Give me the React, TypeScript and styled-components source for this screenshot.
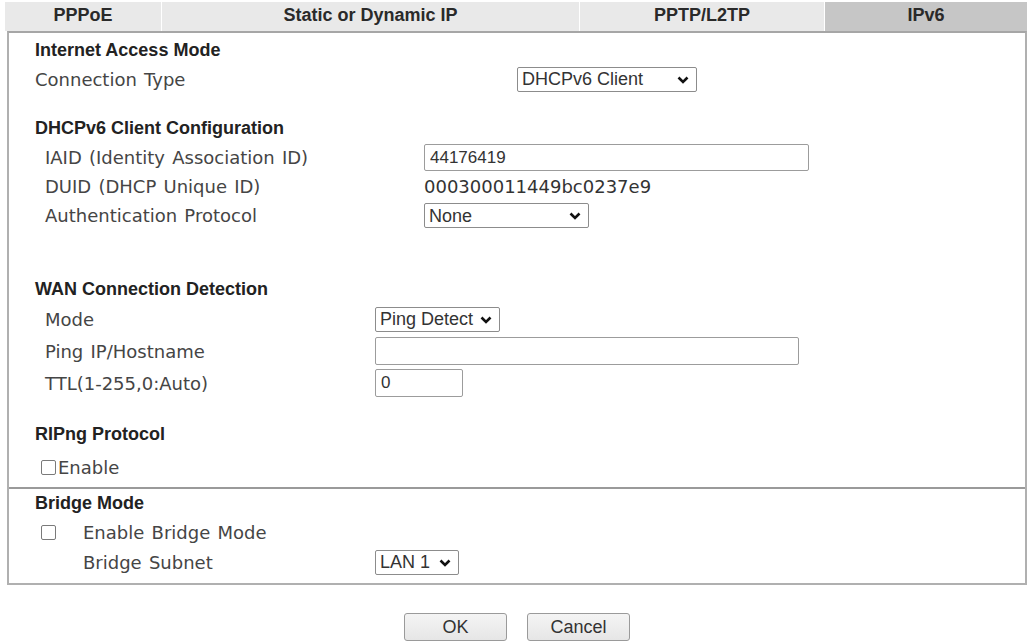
import React from "react";
import styled, { createGlobalStyle } from "styled-components";

const GlobalStyle = createGlobalStyle`
  html, body {
    margin: 0;
    padding: 0;
    background: #ffffff;
  }
  body {
    font-family: "DejaVu Sans", Verdana, sans-serif;
  }
`;

const Page = styled.div`
  width: 1022px;
  padding: 2px 0 0 5px;
`;

const TabBar = styled.div`
  display: grid;
  grid-template-columns: 157px 418px 245px 202px;
  height: 29px;
`;

const Tab = styled.div<{ $active?: boolean }>`
  display: flex;
  align-items: center;
  justify-content: center;
  padding-bottom: 2px;
  background: ${(p) => (p.$active ? "#c6c6c6" : "#e9e9e9")};
  border-right: 1px solid #ffffff;
  font-family: "Liberation Sans", Arial, sans-serif;
  font-weight: bold;
  font-size: 18px;
  color: #2a2a2a;
  &:last-child {
    border-right: none;
  }
`;

const Panel = styled.div`
  margin-left: 2px;
  border: 2px solid #b0b0b0;
  border-top-color: #a6a6a6;
`;

const Section = styled.div<{ $divided?: boolean }>`
  padding: ${(p) => (p.$divided ? "3px 0 6px 26px" : "6px 0 6px 26px")};
  border-top: ${(p) => (p.$divided ? "2px solid #9a9a9a" : "none")};
`;

const Heading = styled.div<{ $gap?: number }>`
  margin-top: ${(p) => p.$gap ?? 0}px;
  font-family: "Liberation Sans", Arial, sans-serif;
  font-weight: bold;
  font-size: 18px;
  line-height: 22px;
  color: #222;
`;

const Row = styled.div<{
  $label: number;
  $height?: number;
  $indent?: number;
  $gap?: number;
}>`
  display: grid;
  grid-template-columns: ${(p) => p.$label}px 1fr;
  align-items: center;
  height: ${(p) => p.$height ?? 29}px;
  margin-top: ${(p) => p.$gap ?? 0}px;
  padding-left: ${(p) => p.$indent ?? 10}px;
`;

const Label = styled.span`
  font-size: 18px;
  word-spacing: 1.5px;
  color: #454545;
  white-space: nowrap;
`;

const Value = styled.span`
  font-size: 18px;
  color: #333;
`;

const TextInput = styled.input<{ $width: number; $height?: number }>`
  box-sizing: border-box;
  width: ${(p) => p.$width}px;
  height: ${(p) => p.$height ?? 28}px;
  padding: 0 5px;
  border: 1px solid #9c9c9c;
  border-radius: 2px;
  font-family: "Liberation Sans", Arial, sans-serif;
  font-size: 17px;
  color: #333;
  background: #fff;
  outline: none;
`;

const SelectWrap = styled.span<{ $width: number }>`
  position: relative;
  display: inline-block;
  width: ${(p) => p.$width}px;
  height: 25px;
`;

const Select = styled.select`
  box-sizing: border-box;
  appearance: none;
  width: 100%;
  height: 100%;
  padding: 0 18px 0 4px;
  border: 1px solid #8c8c8c;
  border-radius: 2px;
  background: #fff;
  font-family: "Liberation Sans", Arial, sans-serif;
  font-size: 18px;
  color: #333;
  outline: none;
`;

const Chevron = styled.svg`
  position: absolute;
  right: 8px;
  top: 9px;
  width: 12px;
  height: 8px;
  pointer-events: none;
`;

const CheckLine = styled.label<{ $gap: number }>`
  display: flex;
  align-items: center;
  gap: ${(p) => p.$gap}px;
  font-size: 18px;
  word-spacing: 1.5px;
  color: #454545;
  white-space: nowrap;
`;

const Box = styled.input`
  appearance: none;
  box-sizing: border-box;
  width: 15px;
  height: 15px;
  margin: 0;
  border: 1px solid #7a7a7a;
  border-radius: 2px;
  background: #fff;
`;

const Actions = styled.div`
  display: flex;
  justify-content: center;
  gap: 20px;
  margin-top: 28px;
  margin-left: 2px;
`;

const Button = styled.button`
  width: 103px;
  height: 28px;
  border: 1px solid #9a9a9a;
  border-radius: 3px;
  background: linear-gradient(#f4f4f4, #e6e6e6);
  font-family: "Liberation Sans", Arial, sans-serif;
  font-size: 18px;
  color: #333;
`;

const Dropdown = ({ value, width }: { value: string; width: number }) => (
  <SelectWrap $width={width}>
    <Select defaultValue={value}>
      <option>{value}</option>
    </Select>
    <Chevron viewBox="0 0 12 8">
      <path d="M1.5 1.5 L6 6 L10.5 1.5" fill="none" stroke="#111" strokeWidth="2.6" />
    </Chevron>
  </SelectWrap>
);

const App = () => (
  <>
    <GlobalStyle />
    <Page>
      <TabBar>
        <Tab>PPPoE</Tab>
        <Tab>Static or Dynamic IP</Tab>
        <Tab>PPTP/L2TP</Tab>
        <Tab $active>IPv6</Tab>
      </TabBar>
      <Panel>
        <Section>
          <Heading>Internet Access Mode</Heading>
          <Row $label={482} $indent={0} $height={36}>
            <Label>Connection Type</Label>
            <Dropdown value="DHCPv6 Client" width={180} />
          </Row>

          <Heading $gap={20}>DHCPv6 Client Configuration</Heading>
          <Row $label={379} $gap={4}>
            <Label>IAID (Identity Association ID)</Label>
            <TextInput $width={385} $height={27} defaultValue="44176419" />
          </Row>
          <Row $label={379}>
            <Label>DUID (DHCP Unique ID)</Label>
            <Value>000300011449bc0237e9</Value>
          </Row>
          <Row $label={379}>
            <Label>Authentication Protocol</Label>
            <Dropdown value="None" width={165} />
          </Row>

          <Heading $gap={48}>WAN Connection Detection</Heading>
          <Row $label={330} $height={32} $gap={3}>
            <Label>Mode</Label>
            <Dropdown value="Ping Detect" width={125} />
          </Row>
          <Row $label={330} $height={32}>
            <Label>Ping IP/Hostname</Label>
            <TextInput $width={424} />
          </Row>
          <Row $label={330} $height={32}>
            <Label>TTL(1-255,0:Auto)</Label>
            <TextInput $width={88} defaultValue="0" />
          </Row>

          <Heading $gap={24}>RIPng Protocol</Heading>
          <Row $label={300} $height={28} $indent={6} $gap={8}>
            <CheckLine $gap={2}>
              <Box type="checkbox" />
              Enable
            </CheckLine>
          </Row>
        </Section>

        <Section $divided>
          <Heading>Bridge Mode</Heading>
          <Row $label={300} $height={30} $indent={6} $gap={3}>
            <CheckLine $gap={27}>
              <Box type="checkbox" />
              Enable Bridge Mode
            </CheckLine>
          </Row>
          <Row $label={292} $height={30} $indent={48}>
            <Label>Bridge Subnet</Label>
            <Dropdown value="LAN 1" width={84} />
          </Row>
        </Section>
      </Panel>
      <Actions>
        <Button>OK</Button>
        <Button>Cancel</Button>
      </Actions>
    </Page>
  </>
);

export default App;
